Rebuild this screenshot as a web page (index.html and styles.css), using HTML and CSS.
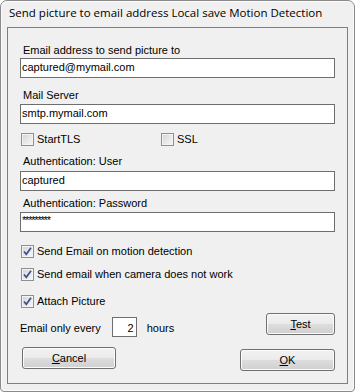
FILE: index.html
```html
<!DOCTYPE html>
<html>
<head>
<meta charset="utf-8">
<link rel="stylesheet" href="styles.css">
</head>
<body>
<div class="window">
  <div class="title">Send picture to email address Local save Motion Detection</div>
  <div class="group">
    <div class="label l1">Email address to send picture to</div>
    <div class="textbox tb1">captured@mymail.com</div>
    <div class="label l2">Mail Server</div>
    <div class="textbox tb2">smtp.mymail.com</div>
    <div class="cbrow r-tls">
      <div class="check tls"><span class="box"></span><span class="ctext">StartTLS</span></div>
      <div class="check ssl"><span class="box"></span><span class="ctext">SSL</span></div>
    </div>
    <div class="label l3">Authentication: User</div>
    <div class="textbox tb3">captured</div>
    <div class="label l4">Authentication: Password</div>
    <div class="textbox tb4 pw">*********</div>
    <div class="check c1"><span class="box checked"><svg width="11" height="11" viewBox="0 0 11 11"><path d="M2 5.5 L4.3 8.3 L9 1.8" fill="none" stroke="#3d4f8c" stroke-width="1.7"/></svg></span><span class="ctext">Send Email on motion detection</span></div>
    <div class="check c2"><span class="box checked"><svg width="11" height="11" viewBox="0 0 11 11"><path d="M2 5.5 L4.3 8.3 L9 1.8" fill="none" stroke="#3d4f8c" stroke-width="1.7"/></svg></span><span class="ctext">Send email when camera does not work</span></div>
    <div class="check c3"><span class="box checked"><svg width="11" height="11" viewBox="0 0 11 11"><path d="M2 5.5 L4.3 8.3 L9 1.8" fill="none" stroke="#3d4f8c" stroke-width="1.7"/></svg></span><span class="ctext">Attach Picture</span></div>
    <div class="every-row">
      <div class="every">
        <span class="etext">Email only every</span>
        <span class="textbox num">2</span>
        <span class="etext hours">hours</span>
      </div>
      <div class="button test"><u>T</u>est</div>
    </div>
    <div class="btnrow">
      <div class="button cancel"><u>C</u>ancel</div>
      <div class="button ok"><u>O</u>K</div>
    </div>
  </div>
</div>
</body>
</html>
```

FILE: styles.css
```css
html, body {
  margin: 0;
  padding: 0;
  background: #ffffff;
}
.window {
  box-sizing: border-box;
  width: 355px;
  height: 392px;
  border: 1px solid #8a8a8a;
  border-radius: 7px 7px 4px 4px;
  background: #f0f0f0;
  box-shadow: inset 1px 1px 0 #fbfbfb, inset -1px -1px 0 #fbfbfb;
  display: flex;
  flex-direction: column;
  font-family: "Liberation Sans", Arial, sans-serif;
  font-size: 11px;
  color: #000;
}
.title {
  box-sizing: border-box;
  height: 26px;
  padding: 5px 0 0 8px;
  font-family: "Open Sans", "Noto Sans", sans-serif;
  font-size: 11.5px;
  line-height: 14px;
  color: #000;
  white-space: nowrap;
}
.group {
  box-sizing: border-box;
  margin: 0 6px;
  height: 357px;
  border: 1px solid #7e7e7e;
  padding: 0 12px;
  display: flex;
  flex-direction: column;
}
.label {
  line-height: 13px;
  height: 13px;
  padding-left: 3px;
  white-space: nowrap;
}
.textbox {
  box-sizing: border-box;
  height: 20px;
  border: 1px solid #6e6e6e;
  background: #fff;
  line-height: 16px;
  padding: 0 0 0 1px;
  white-space: nowrap;
}
.pw { font-size: 11px; letter-spacing: -1.2px; line-height: 15px; }
.l1 { margin-top: 16px; }
.tb1 { margin-top: 1px; }
.l2 { margin-top: 11px; }
.tb2 { margin-top: 2px; }
.r-tls { margin-top: 9px; }
.l3 { margin-top: 9px; }
.tb3 { margin-top: 3px; }
.l4 { margin-top: 6px; }
.tb4 { margin-top: 2px; }
.c1 { margin-top: 13px; }
.c2 { margin-top: 10px; }
.c3 { margin-top: 14px; }
.cbrow {
  display: flex;
}
.check {
  display: flex;
  align-items: flex-start;
  height: 13px;
  margin-left: 1px;
}
.cbrow .tls { width: 140px; }
.cbrow .ssl { margin-left: 0; }
.box {
  box-sizing: border-box;
  width: 13px;
  height: 13px;
  border: 1px solid #8e8f8f;
  background: linear-gradient(135deg, #d0d2d6 0%, #e6e7e9 50%, #f8f8f8 100%);
  box-shadow: inset 0 0 0 1px #f4f4f4;
  display: flex;
  align-items: center;
  justify-content: center;
  flex: none;
}
.box svg { display: block; }
.ctext {
  margin-left: 3px;
  line-height: 13px;
  white-space: nowrap;
}
.every-row {
  margin-top: 5px;
  display: flex;
  justify-content: space-between;
  align-items: flex-start;
}
.every {
  margin-top: 4px;
  display: flex;
  align-items: baseline;
}
.etext { line-height: 13px; }
.num {
  width: 25px;
  margin-left: 11px;
  text-align: right;
  padding: 2px 2px 0 0;
}
.hours { margin-left: 10px; }
.button {
  box-sizing: border-box;
  height: 22px;
  border: 1px solid #707070;
  border-radius: 3px;
  background: linear-gradient(to bottom, #f2f2f2 0%, #ebebeb 48%, #dddddd 52%, #cfcfcf 100%);
  box-shadow: inset 0 0 0 1px #fbfbfb;
  text-align: center;
  line-height: 20px;
  white-space: nowrap;
}
.button u { text-decoration: underline; text-underline-offset: 1px; }
.test { width: 69px; }
.btnrow {
  margin-top: 10px;
  display: flex;
  justify-content: space-between;
  align-items: flex-start;
}
.cancel { width: 94px; margin-left: 2px; }
.ok { width: 95px; margin-top: 2px; }
```
